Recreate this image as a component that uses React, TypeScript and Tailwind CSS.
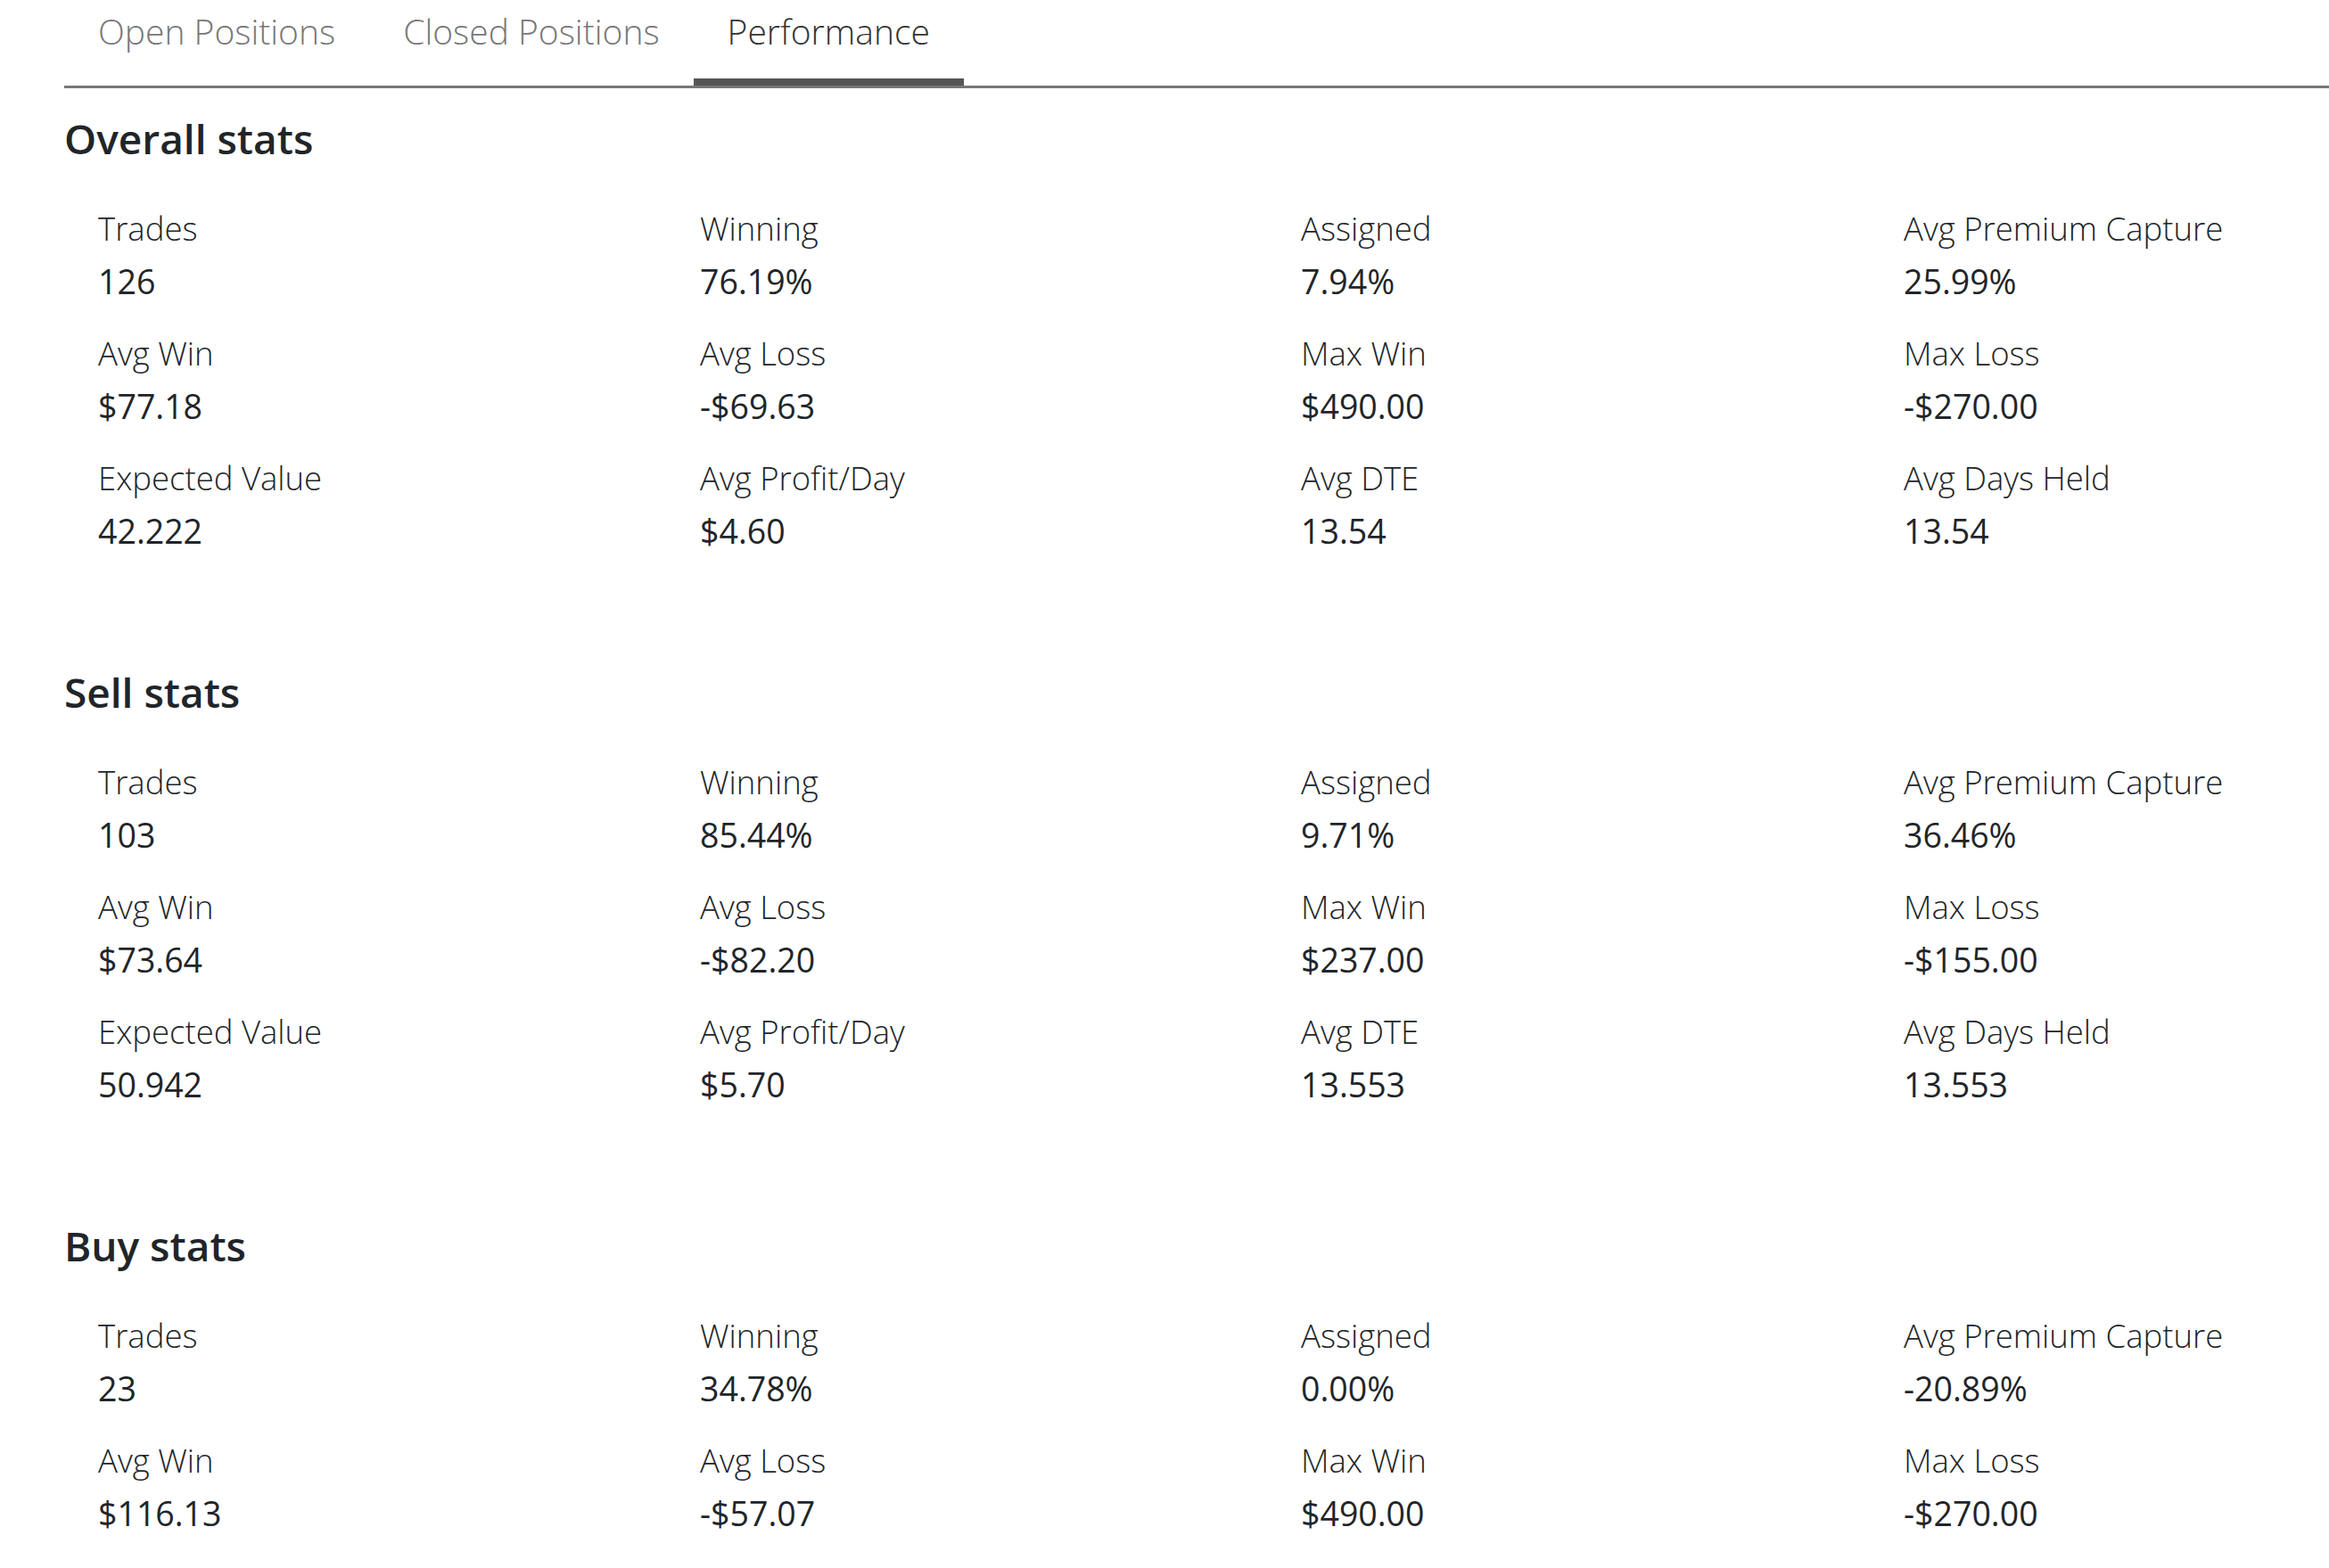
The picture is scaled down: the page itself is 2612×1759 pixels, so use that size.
type Stat = {
    label: string
    value: string
}

type Section = {
    title: string
    stats: Stat[]
}

const sections: Section[] = [
    {
        title: "Overall stats",
        stats: [
            { label: "Trades", value: "126" },
            { label: "Winning", value: "76.19%" },
            { label: "Assigned", value: "7.94%" },
            { label: "Avg Premium Capture", value: "25.99%" },
            { label: "Avg Win", value: "$77.18" },
            { label: "Avg Loss", value: "-$69.63" },
            { label: "Max Win", value: "$490.00" },
            { label: "Max Loss", value: "-$270.00" },
            { label: "Expected Value", value: "42.222" },
            { label: "Avg Profit/Day", value: "$4.60" },
            { label: "Avg DTE", value: "13.54" },
            { label: "Avg Days Held", value: "13.54" },
        ],
    },
    {
        title: "Sell stats",
        stats: [
            { label: "Trades", value: "103" },
            { label: "Winning", value: "85.44%" },
            { label: "Assigned", value: "9.71%" },
            { label: "Avg Premium Capture", value: "36.46%" },
            { label: "Avg Win", value: "$73.64" },
            { label: "Avg Loss", value: "-$82.20" },
            { label: "Max Win", value: "$237.00" },
            { label: "Max Loss", value: "-$155.00" },
            { label: "Expected Value", value: "50.942" },
            { label: "Avg Profit/Day", value: "$5.70" },
            { label: "Avg DTE", value: "13.553" },
            { label: "Avg Days Held", value: "13.553" },
        ],
    },
    {
        title: "Buy stats",
        stats: [
            { label: "Trades", value: "23" },
            { label: "Winning", value: "34.78%" },
            { label: "Assigned", value: "0.00%" },
            { label: "Avg Premium Capture", value: "-20.89%" },
            { label: "Avg Win", value: "$116.13" },
            { label: "Avg Loss", value: "-$57.07" },
            { label: "Max Win", value: "$490.00" },
            { label: "Max Loss", value: "-$270.00" },
        ],
    },
]

const tabs = ["Open Positions", "Closed Positions", "Performance"]

const StatsSection: React.FC<{ section: Section }> = ({ section }) => {
    return (
        <div className="mb-[126px]">
            <h4 className="text-[46px] leading-[60px] font-semibold text-[#212529]">{section.title}</h4>
            <div className="grid grid-cols-[675px_674px_676px_1fr] gap-y-[32px] mt-[47px] pl-[38px]">
                {section.stats.map((s, i) => (
                    <div key={i} className="flex flex-col">
                        <div className="text-[36.5px] leading-[48px] font-light text-[#212529]">{s.label}</div>
                        <div className="text-[37.5px] leading-[48px] mt-[12px] text-[#212529]">{s.value}</div>
                    </div>
                ))}
            </div>
        </div>
    )
}

export default function App() {
    return (
        <div className="h-screen overflow-hidden bg-white font-['Open_Sans',sans-serif]">
            <div className="ml-[72px]">
                <div className="flex border-b-[3px] border-[#777777]">
                    {tabs.map((t) => (
                        <div
                            key={t}
                            className={
                                t === "Performance"
                                    ? "h-[96px] px-[38px] pt-[8px] border-b-[8px] border-[#555555] text-[39px] leading-[54px] font-light text-[#333333]"
                                    : "h-[96px] px-[38px] pt-[8px] border-b-[8px] border-transparent text-[39px] leading-[54px] font-light text-[#777777]"
                            }
                        >
                            {t}
                        </div>
                    ))}
                </div>
                <div className="mt-[26px]">
                    {sections.map((s) => (
                        <StatsSection key={s.title} section={s} />
                    ))}
                </div>
            </div>
        </div>
    )
}
